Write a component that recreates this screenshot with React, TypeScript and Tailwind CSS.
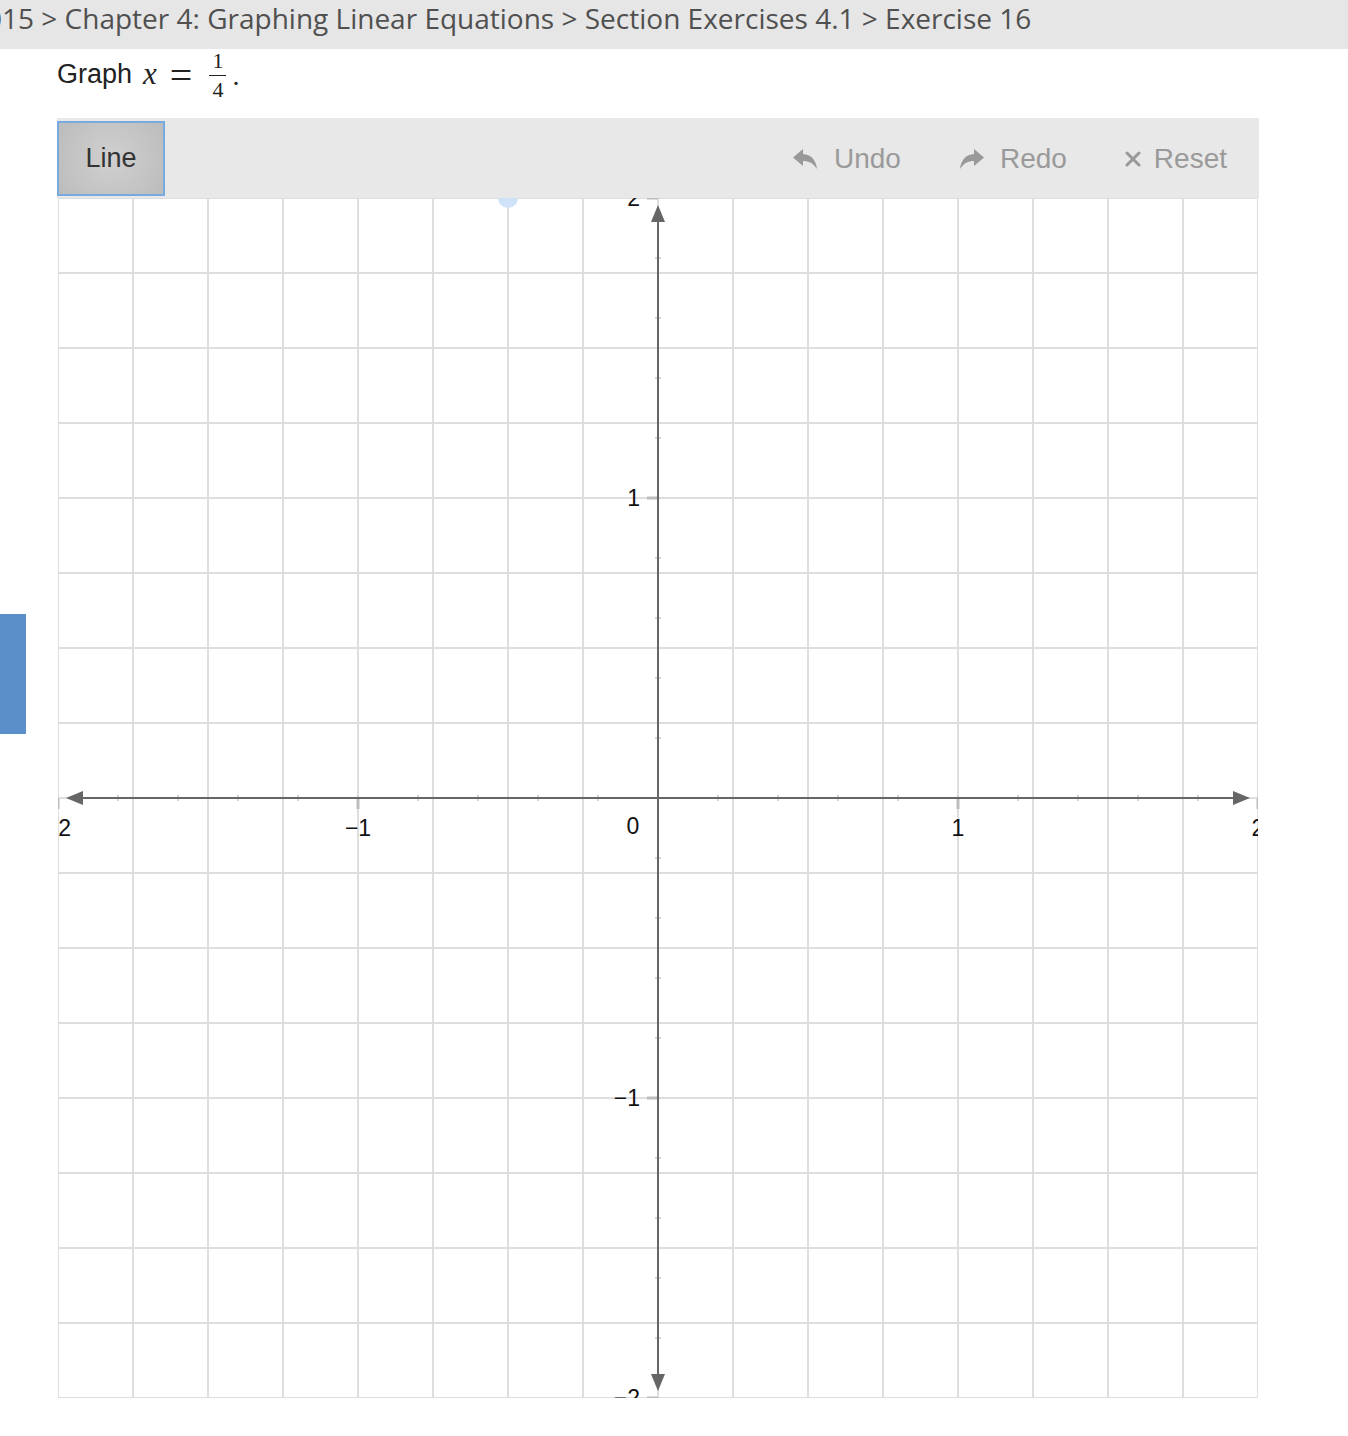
import React from "react";

const W = 1200;
const CELL = 75;
const UNIT = 300;

const Grid = () => {
  const lines = Array.from({ length: 17 }, (_, i) => i * CELL);
  const minor = Array.from({ length: 21 }, (_, i) => i * 60);
  const majors = [-1, 1];
  const lbl = "font-['Liberation_Sans',Arial,sans-serif]";

  return (
    <svg width={W} height={W} viewBox={`0 0 ${W} ${W}`} className="block overflow-hidden">
      {lines.map((p) => (
        <g key={p}>
          <line x1={p} y1={0} x2={p} y2={W} stroke="#dedede" strokeWidth={2} />
          <line x1={0} y1={p} x2={W} y2={p} stroke="#dedede" strokeWidth={2} />
        </g>
      ))}

      {/* point hint */}
      <circle cx={450} cy={0} r={10} fill="#cfe2f8" />

      {/* minor ticks */}
      {minor.map((p) => (
        <g key={"m" + p}>
          <line x1={p} y1={597} x2={p} y2={603} stroke="#d6d6d6" strokeWidth={2} />
          <line x1={597} y1={p} x2={603} y2={p} stroke="#d6d6d6" strokeWidth={2} />
        </g>
      ))}

      {/* major ticks */}
      {[-2, -1, 1, 2].map((u) => (
        <g key={"M" + u}>
          <line x1={600 + u * UNIT} y1={600} x2={600 + u * UNIT} y2={611} stroke="#bdbdbd" strokeWidth={3} />
          <line x1={589} y1={600 - u * UNIT} x2={600} y2={600 - u * UNIT} stroke="#bdbdbd" strokeWidth={3} />
        </g>
      ))}

      {/* axes */}
      <line x1={14} y1={600} x2={1186} y2={600} stroke="#666" strokeWidth={2} />
      <line x1={600} y1={14} x2={600} y2={1186} stroke="#666" strokeWidth={2} />
      <polygon points="8,600 25,593 25,607" fill="#666" />
      <polygon points="1192,600 1175,593 1175,607" fill="#666" />
      <polygon points="600,7 593,24 607,24" fill="#666" />
      <polygon points="600,1193 593,1176 607,1176" fill="#666" />

      {/* labels */}
      <g className={lbl} fontSize={23} fill="#111">
        <text x={0} y={638} textAnchor="middle">−2</text>
        <text x={1200} y={638} textAnchor="middle">2</text>
        {majors.map((u) => (
          <text key={"x" + u} x={600 + u * UNIT} y={638} textAnchor="middle">
            {u < 0 ? "−1" : "1"}
          </text>
        ))}
        <text x={575} y={636} textAnchor="middle">0</text>
        <text x={582} y={8} textAnchor="end">2</text>
        <text x={582} y={308} textAnchor="end">1</text>
        <text x={582} y={908} textAnchor="end">−1</text>
        <text x={582} y={1208} textAnchor="end">−2</text>
      </g>
    </svg>
  );
};

const UndoIcon = () => (
  <svg width="26" height="22" viewBox="0 0 26 22" fill="#999">
    <path d="M11 1 L1 9.5 L11 18 L11 13 C17 13 21 15 25 21 C24 12 19 6.5 11 6 Z" />
  </svg>
);

const RedoIcon = () => (
  <svg width="26" height="22" viewBox="0 0 26 22" fill="#999">
    <path d="M15 1 L25 9.5 L15 18 L15 13 C9 13 5 15 1 21 C2 12 7 6.5 15 6 Z" />
  </svg>
);

const XIcon = () => (
  <svg width="16" height="16" viewBox="0 0 16 16" stroke="#999" strokeWidth={3} strokeLinecap="round">
    <line x1="2" y1="2" x2="14" y2="14" />
    <line x1="14" y1="2" x2="2" y2="14" />
  </svg>
);

export default function App() {
  return (
    <div className="relative w-[1348px] h-[1436px] bg-white overflow-hidden font-['Liberation_Sans',Arial,sans-serif]">
      <div className="h-[49px] bg-[#e6e6e6] flex items-start pt-[3px] overflow-hidden">
        <span className="ml-[-30px] whitespace-nowrap text-[28px] text-[#505050] font-['Open_Sans',sans-serif] leading-[30px]">
          2015 &gt; Chapter 4: Graphing Linear Equations &gt; Section Exercises 4.1 &gt; Exercise 16
        </span>
      </div>

      <div className="absolute left-0 top-[614px] w-[26px] h-[120px] bg-[#5b8fca]" />

      <div className="pl-[57px]">
        <div className="h-[69px] flex items-start text-[27px] text-[#222]">
          <span className="mt-[5px]">Graph</span>
          <span className="ml-[11px] mt-[2px] italic font-['Liberation_Serif',serif] text-[31px]">x</span>
          <span className="ml-[13px] mt-[-3px] font-['Liberation_Serif',serif] text-[40px]">=</span>
          <span className="ml-[17px] inline-flex flex-col items-center font-['Liberation_Serif',serif] text-[22px] leading-[22px] mt-[1px]">
            <span>1</span>
            <span className="w-[17px] mt-[3px] mb-[3px] border-t border-[#222]" />
            <span>4</span>
          </span>
          <span className="ml-[6px] mt-[6px] font-['Liberation_Serif',serif] text-[28px]">.</span>
        </div>

        <div className="w-[1202px]">
          <div className="h-[80px] bg-[#e8e8e8] flex items-center justify-between pt-[1px]">
            <button className="w-[108px] h-[75px] border-2 border-[#77aae0] bg-[radial-gradient(circle,#d0d0d0_0%,#bcbcbc_100%)] text-[27px] text-[#333]">
              Line
            </button>
            <div className="flex items-center text-[28px] text-[#9a9a9a] pr-[32px]">
              <span className="flex items-center gap-[16px]">
                <UndoIcon />
                Undo
              </span>
              <span className="flex items-center gap-[15px] ml-[58px]">
                <RedoIcon />
                Redo
              </span>
              <span className="flex items-center gap-[13px] ml-[58px]">
                <XIcon />
                Reset
              </span>
            </div>
          </div>
          <div className="pl-px">
            <Grid />
          </div>
        </div>
      </div>
    </div>
  );
}
